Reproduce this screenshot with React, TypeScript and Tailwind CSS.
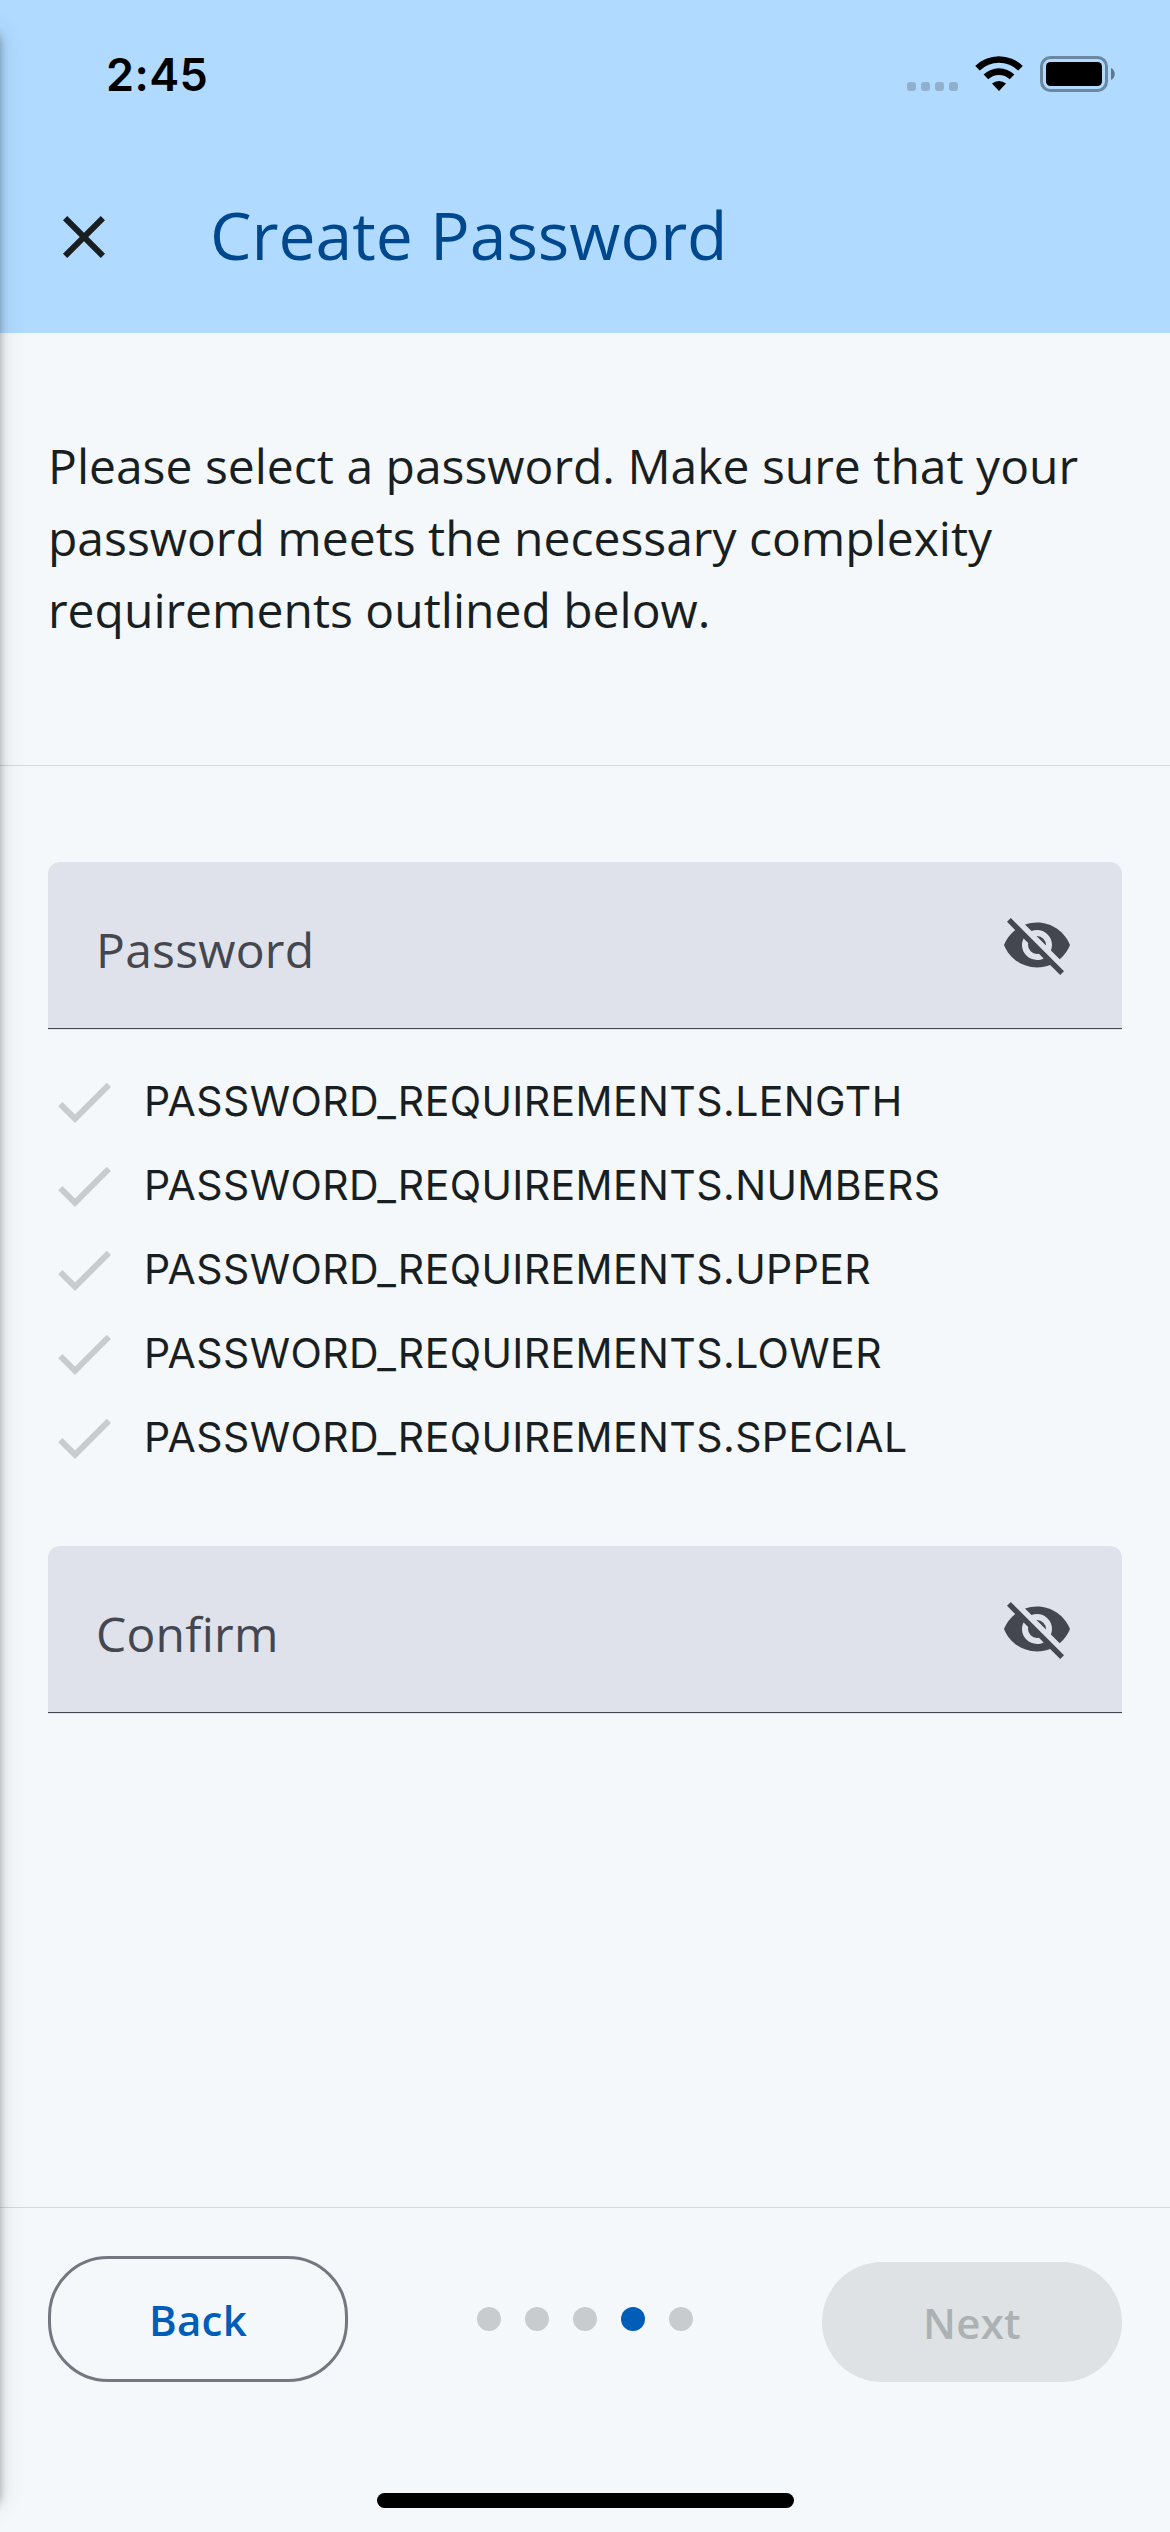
import React from "react";

const requirements = ["LENGTH", "NUMBERS", "UPPER", "LOWER", "SPECIAL"];

function Icon({ d, className }: { d: string; className: string }) {
  return (
    <svg viewBox="0 0 24 24" className={`size-[72px] shrink-0 fill-current ${className}`}>
      <path d={d} />
    </svg>
  );
}

const CLOSE =
  "M19 6.41 17.59 5 12 10.59 6.41 5 5 6.41 10.59 12 5 17.59 6.41 19 12 13.41 17.59 19 19 17.59 13.41 12z";
const CHECK = "M9 16.17 4.83 12l-1.42 1.41L9 19 21 7l-1.41-1.41z";
const EYE_OFF =
  "M11.83,9L15,12.16C15,12.11 15,12.05 15,12A3,3 0 0,0 12,9C11.94,9 11.89,9 11.83,9M7.53,9.8L9.08,11.35C9.03,11.56 9,11.77 9,12A3,3 0 0,0 12,15C12.22,15 12.44,14.97 12.65,14.92L14.2,16.47C13.53,16.8 12.79,17 12,17A5,5 0 0,1 7,12C7,11.21 7.2,10.47 7.53,9.8M2,4.27L4.28,6.55L4.73,7C3.08,8.3 1.78,10 1,12C2.73,16.39 7,19.5 12,19.5C13.55,19.5 15.03,19.2 16.38,18.66L16.81,19.08L19.73,22L21,20.73L3.27,3M12,7A5,5 0 0,1 17,12C17,12.64 16.87,13.26 16.64,13.82L19.57,16.75C21.07,15.5 22.27,13.86 23,12C21.27,7.61 17,4.5 12,4.5C10.6,4.5 9.26,4.75 8,5.2L10.17,7.35C10.74,7.13 11.35,7 12,7Z";

function StatusBar() {
  return (
    <div className="flex h-[141px] justify-between pl-[106px] pr-[54px]">
      <span className="mt-[47px] font-['Inter'] text-[45px] font-semibold leading-[56px] tracking-[0.4px] text-black">
        2:45
      </span>
      <div className="mt-[55px] flex h-[37px]">
        <div className="mt-[27px] flex gap-[5px]">
          {[0, 1, 2, 3].map((i) => (
            <span key={i} className="size-[9px] rounded-[3px] bg-[#91b0ce]" />
          ))}
        </div>
        <svg viewBox="0 0 48 36" className="ml-[17px] h-[36px] w-[48px]">
          <path d="M0.2 10.9a34 34 0 0 1 47.6 0l-4.6 4.7a27.4 27.4 0 0 0-38.4 0z" />
          <path d="M8.6 19.6a22 22 0 0 1 30.8 0l-4.7 4.7a15.3 15.3 0 0 0-21.4 0z" />
          <path d="M17 28.6a10.6 10.6 0 0 1 14 0L24 36z" />
        </svg>
        <svg viewBox="0 0 76 36" className="ml-[17px] mt-px h-[36px] w-[76px]">
          <rect x="1.5" y="1.5" width="65" height="33" rx="9" fill="none" stroke="#6c87a0" strokeWidth="3" />
          <rect x="6" y="6" width="56" height="24" rx="4.5" />
          <path d="M71 12c5 2 5 10 0 12z" fill="#5f778d" />
        </svg>
      </div>
    </div>
  );
}

function Field({ label }: { label: string }) {
  return (
    <div className="h-[168px] rounded-t-[12px] border-b border-[#e3e6ea] bg-[#dfe2eb]">
      <div className="flex h-[167px] items-start justify-between border-b border-[#44474f] pl-[48px] pr-[49px] text-[#44474f]">
        <span className="mt-[52px] text-[48px] leading-[72px] tracking-[0.25px]">{label}</span>
        <Icon d={EYE_OFF} className="mt-[47px]" />
      </div>
    </div>
  );
}

export default function App() {
  return (
    <div className="relative flex h-[2532px] w-[1170px] flex-col overflow-hidden bg-[#f4f8fb] font-['Open_Sans',sans-serif] text-[#191f21]">
      <header className="h-[333px] bg-[#b0daff]">
        <StatusBar />
        <div className="flex pl-[48px] pt-[57px]">
          <Icon d={CLOSE} className="mt-[3px]" />
          <h1 className="ml-[90px] text-[66px] leading-[72px] text-[#00488d]">Create Password</h1>
        </div>
      </header>

      <section className="h-[433px] border-b border-[#d3d8db] px-[48px] pt-[97px]">
        <p className="text-[48px] leading-[72px]">
          Please select a password. Make sure that your
          <br />
          password meets the necessary complexity
          <br />
          requirements outlined below.
        </p>
      </section>

      <main className="flex flex-1 flex-col px-[48px] pt-[96px]">
        <Field label="Password" />
        <ul className="mt-[30px] mb-[66px]">
          {requirements.map((r) => (
            <li key={r} className="flex h-[84px] items-center">
              <Icon d={CHECK} className="text-[#c8cccf]" />
              <span className="ml-[24px] pb-[2px] font-['Inter'] text-[41px] leading-[54px] tracking-[0.4px]">
                PASSWORD_REQUIREMENTS.{r}
              </span>
            </li>
          ))}
        </ul>
        <Field label="Confirm" />
      </main>

      <footer className="h-[325px] border-t border-[#d3d8db] px-[48px] pt-[48px]">
        <div className="grid h-[126px] grid-cols-[300px_1fr_300px] items-end">
          <button className="h-[126px] rounded-[60px] border-[3px] border-[#74777f] pt-[2px] text-[42px] font-semibold leading-[60px] tracking-[0.3px] text-[#005db8]">
            Back
          </button>
          <div className="flex h-full items-center justify-center gap-[24px]">
            {[0, 1, 2, 3, 4].map((i) => (
              <span
                key={i}
                className={i === 3 ? "size-[24px] rounded-full bg-[#005db8]" : "size-[24px] rounded-full bg-[#c8cccf]"}
              />
            ))}
          </div>
          <button className="h-[120px] rounded-[60px] bg-[#dee2e4] pt-[2px] text-[42px] font-semibold leading-[60px] tracking-[0.3px] text-[#acb1b4]">
            Next
          </button>
        </div>
        <div className="mx-auto mt-[111px] h-[15px] w-[417px] rounded-full bg-black" />
      </footer>

      {/* Shadow cast by the side drawer parked beyond the left edge */}
      <div className="absolute -left-[100px] top-[28px] h-[2476px] w-[100px] rounded-[12px] shadow-[0_3px_9px_rgba(0,0,0,0.3),0_3px_24px_3px_rgba(0,0,0,0.1)]" />
    </div>
  );
}
